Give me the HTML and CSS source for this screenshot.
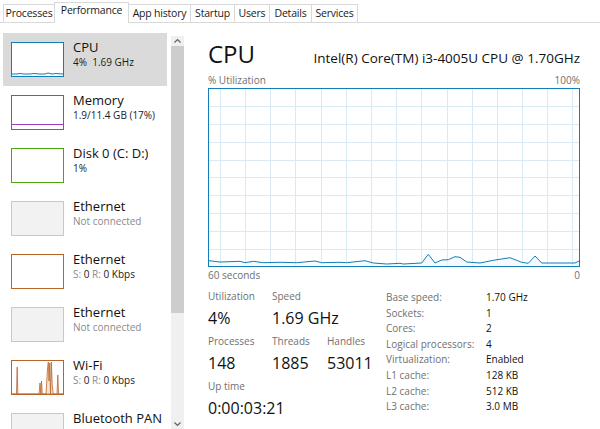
FILE: index.html
```html
<!DOCTYPE html>
<html>
<head>
<meta charset="utf-8">
<link rel="stylesheet" href="styles.css">
</head>
<body>
<div class="tabs">
  <div class="tab t-proc">Processes</div>
  <div class="tab tab-active t-perf">Performance</div>
  <div class="tab t-app">App history</div>
  <div class="tab t-start">Startup</div>
  <div class="tab t-users">Users</div>
  <div class="tab t-det">Details</div>
  <div class="tab t-serv">Services</div>
</div>
<div class="content">
  <aside class="sidebar">
    <div class="list">
      <div class="item item-sel">
        <div class="thumb thumb-cpu">
          <svg width="51" height="33" viewBox="0 0 51 33"><polyline fill="none" stroke="#117dbb" stroke-width="1" points="0,31 5,31 8,30.5 12,31 18,31 22,30.5 28,31 33,31 36,30 40,31 44,30.5 51,31"/></svg>
        </div>
        <div class="info"><div class="name">CPU</div><div class="sub">4%&nbsp; 1.69 GHz</div></div>
      </div>
      <div class="item">
        <div class="thumb thumb-mem">
          <svg width="51" height="33" viewBox="0 0 51 33"><line x1="0" y1="28.5" x2="51" y2="28.5" stroke="#a03cc4" stroke-width="1"/></svg>
        </div>
        <div class="info"><div class="name">Memory</div><div class="sub">1.9/11.4 GB (17%)</div></div>
      </div>
      <div class="item">
        <div class="thumb thumb-disk"></div>
        <div class="info"><div class="name">Disk 0 (C: D:)</div><div class="sub">1%</div></div>
      </div>
      <div class="item">
        <div class="thumb thumb-nc"></div>
        <div class="info"><div class="name">Ethernet</div><div class="sub sub-gray">Not connected</div></div>
      </div>
      <div class="item">
        <div class="thumb thumb-eth"></div>
        <div class="info"><div class="name">Ethernet</div><div class="sub"><span class="dim">S:</span> 0 <span class="dim">R:</span> 0 Kbps</div></div>
      </div>
      <div class="item">
        <div class="thumb thumb-nc"></div>
        <div class="info"><div class="name">Ethernet</div><div class="sub sub-gray">Not connected</div></div>
      </div>
      <div class="item">
        <div class="thumb thumb-eth">
          <svg width="51" height="33" viewBox="0 0 51 33"><polygon fill="#f6e4d2" stroke="#b8652a" stroke-width="0.8" points="0,33 4.5,33 5.2,6 5.8,33 27,33 28,22 28.8,33 29.5,20 30.3,33 34,33 35.5,8 36.3,1 37,20 37.8,2 38.5,33 39.4,1 40.2,24 41.2,33 45,33 45.8,14 46.6,33 51,33"/></svg>
        </div>
        <div class="info"><div class="name">Wi-Fi</div><div class="sub"><span class="dim">S:</span> 0 <span class="dim">R:</span> 0 Kbps</div></div>
      </div>
      <div class="item">
        <div class="thumb thumb-nc"></div>
        <div class="info"><div class="name">Bluetooth PAN</div><div class="sub sub-gray">Not connected</div></div>
      </div>
    </div>
    <div class="scrollbar">
      <div class="sb-arrow"><svg width="13" height="10" viewBox="0 0 13 10"><polyline points="3.5,6.5 6.5,3.5 9.5,6.5" fill="none" stroke="#606060" stroke-width="1.2"/></svg></div>
      <div class="sb-thumb"></div>
      <div class="sb-track"></div>
      <div class="sb-arrow"><svg width="13" height="10" viewBox="0 0 13 10"><polyline points="3.5,3.5 6.5,6.5 9.5,3.5" fill="none" stroke="#606060" stroke-width="1.2"/></svg></div>
    </div>
  </aside>
  <main class="main">
    <div class="head">
      <div class="head-title">CPU</div>
      <div class="head-model">Intel(R) Core(TM) i3-4005U CPU @ 1.70GHz</div>
    </div>
    <div class="axis axis-top"><span>% Utilization</span><span>100%</span></div>
    <div class="graph">
      <svg width="372" height="179" viewBox="0 0 372 179">
        <path fill="none" stroke="#d9eaf4" stroke-width="1" d="M12.5 1V178M37.5 1V178M62.5 1V178M87.5 1V178M113.5 1V178M138.5 1V178M163.5 1V178M188.5 1V178M213.5 1V178M239.5 1V178M264.5 1V178M289.5 1V178M314.5 1V178M339.5 1V178M364.5 1V178M1 18.5H371M1 36.5H371M1 54.5H371M1 72.5H371M1 89.5H371M1 107.5H371M1 125.5H371M1 143.5H371M1 161.5H371"/>
        <polygon fill="#f1f6fa" fill-opacity="0.6" points="1,178 1,172.7 12,174 32,173.3 37,174.7 45.3,173.3 55.3,174.7 72,174.3 88.7,174.7 107,173 113.7,174.7 132,174.3 138.7,174.7 157,172.7 165.3,175 178.7,176 192,175.3 195.3,176 213.7,175 220.3,166.3 227,175 233.7,172 240.3,171.7 247,168.7 252,169.3 258.7,174 272,175 285.3,172.3 302,169.7 313.7,174.3 320.3,175.3 327,168 333.7,175 350.3,175 367,175 371,173 371,178"/>
        <polyline fill="none" stroke="#117dbb" stroke-width="1" points="1,172.7 12,174 32,173.3 37,174.7 45.3,173.3 55.3,174.7 72,174.3 88.7,174.7 107,173 113.7,174.7 132,174.3 138.7,174.7 157,172.7 165.3,175 178.7,176 192,175.3 195.3,176 213.7,175 220.3,166.3 227,175 233.7,172 240.3,171.7 247,168.7 252,169.3 258.7,174 272,175 285.3,172.3 302,169.7 313.7,174.3 320.3,175.3 327,168 333.7,175 350.3,175 367,175 371,173"/>
        <rect x="0.5" y="0.5" width="371" height="178" fill="none" stroke="#117dbb" stroke-width="1"/>
      </svg>
    </div>
    <div class="axis axis-bottom"><span>60 seconds</span><span>0</span></div>
    <div class="stats">
      <div class="stats-left">
        <div class="stat s-util"><div class="label">Utilization</div><div class="value">4%</div></div>
        <div class="stat s-speed"><div class="label">Speed</div><div class="value">1.69 GHz</div></div>
        <div class="stat s-proc"><div class="label">Processes</div><div class="value">148</div></div>
        <div class="stat s-thr"><div class="label">Threads</div><div class="value">1885</div></div>
        <div class="stat s-hnd"><div class="label">Handles</div><div class="value">53011</div></div>
        <div class="stat s-up"><div class="label">Up time</div><div class="value">0:00:03:21</div></div>
      </div>
      <div class="stats-right">
        <div class="row"><span class="k">Base speed:</span><span class="v">1.70 GHz</span></div>
        <div class="row"><span class="k">Sockets:</span><span class="v">1</span></div>
        <div class="row"><span class="k">Cores:</span><span class="v">2</span></div>
        <div class="row"><span class="k">Logical processors:</span><span class="v">4</span></div>
        <div class="row"><span class="k">Virtualization:</span><span class="v">Enabled</span></div>
        <div class="row"><span class="k">L1 cache:</span><span class="v">128 KB</span></div>
        <div class="row"><span class="k">L2 cache:</span><span class="v">512 KB</span></div>
        <div class="row"><span class="k">L3 cache:</span><span class="v">3.0 MB</span></div>
      </div>
    </div>
  </main>
</div>
</body>
</html>
```

FILE: styles.css
```css
* { box-sizing: border-box; }
html, body {
  margin: 0;
  padding: 0;
  background: #ffffff;
  width: 600px;
  height: 429px;
  overflow: hidden;
}
body {
  font-family: "Open Sans", "Noto Sans", sans-serif;
  color: #000;
}

/* Tabs */
.tabs {
  display: flex;
  align-items: flex-end;
  height: 23px;
  padding-left: 3px;
  border-bottom: 1px solid #d9d9d9;
}
.tab {
  height: 18px;
  margin-right: -1px;
  border: 1px solid #d9d9d9;
  border-bottom: none;
  font-size: 10.5px;
  line-height: 16px;
  letter-spacing: -0.2px;
  text-align: center;
  white-space: nowrap;
  color: #1a1a1a;
  background: #fff;
}
.tab-active {
  height: 21px;
  margin-bottom: -1px;
  line-height: 15px;
  position: relative;
  z-index: 1;
}
.t-proc { width: 52px; }
.t-perf { width: 75px; }
.t-app { width: 63px; }
.t-start { width: 45px; }
.t-users { width: 36px; }
.t-det { width: 43px; }
.t-serv { width: 47px; }

/* Content */
.content {
  display: flex;
  height: 406px;
}
.sidebar {
  width: 186px;
  display: flex;
  flex-shrink: 0;
}
.list {
  width: 167px;
  padding: 10px 0 0 3px;
  overflow: hidden;
}
.item {
  display: flex;
  height: 53px;
  padding: 9px 0 0 8px;
}
.item-sel { background: #dadada; }
.thumb {
  width: 53px;
  height: 35px;
  border: 1px solid #c8c8c8;
  background: #fff;
  flex-shrink: 0;
}
.thumb svg { display: block; }
.thumb-cpu { border-color: #117dbb; }
.thumb-mem { border-color: #a03cc4; }
.thumb-disk { border-color: #4da60c; }
.thumb-nc { border-color: #c8c8c8; background: #f2f2f2; }
.thumb-eth { border-color: #b8652a; }
.info {
  margin-left: 9px;
  margin-top: -3px;
  white-space: nowrap;
  overflow: hidden;
}
.name {
  font-size: 13px;
  line-height: 17px;
  color: #111;
}
.sub {
  font-size: 10px;
  line-height: 13px;
  color: #1a1a1a;
}
.sub-gray { color: #8a8a8a; }
.dim { color: #8a8a8a; }

/* Scrollbar */
.scrollbar {
  width: 13px;
  margin-left: 4px;
  margin-top: 13px;
  display: flex;
  flex-direction: column;
  background: #f0f0f0;
}
.sb-arrow { height: 10px; flex-shrink: 0; }
.sb-arrow svg { display: block; }
.sb-thumb {
  height: 267px;
  background: #cdcdcd;
  flex-shrink: 0;
}
.sb-track { flex: 1; }

/* Main */
.main {
  flex: 1;
  padding: 17px 20px 0 22px;
}
.head {
  display: flex;
  justify-content: space-between;
  align-items: baseline;
  height: 28px;
}
.head-title {
  font-size: 24px;
  line-height: 28px;
  color: #111;
}
.head-model {
  font-size: 13.5px;
  line-height: 28px;
  color: #111;
  white-space: nowrap;
}
.axis {
  display: flex;
  justify-content: space-between;
  font-size: 10px;
  line-height: 12px;
  color: #707070;
}
.axis-top { margin-top: 6px; margin-bottom: 2px; }
.axis-bottom { margin-top: 2px; }
.graph { height: 179px; }
.graph svg { display: block; }

/* Stats */
.stats {
  display: flex;
  margin-top: 8px;
}
.stats-left {
  width: 178px;
  display: grid;
  grid-template-columns: 64px 55px 59px;
  grid-template-areas:
    "util speed ."
    "proc thr hnd"
    "up up up";
}
.s-util { grid-area: util; }
.s-speed { grid-area: speed; }
.s-proc { grid-area: proc; }
.s-thr { grid-area: thr; }
.s-hnd { grid-area: hnd; }
.s-up { grid-area: up; }
.stat { padding-bottom: 4px; white-space: nowrap; }
.label {
  font-size: 10px;
  line-height: 14px;
  color: #707070;
}
.value {
  margin-top: 3px;
  font-size: 16px;
  line-height: 24px;
  color: #111;
}
.stats-right {
  flex: 1;
  margin-top: 1px;
}
.row {
  display: flex;
  font-size: 10px;
  line-height: 15.6px;
  white-space: nowrap;
}
.k {
  width: 100px;
  color: #707070;
}
.v { color: #111; }
```
